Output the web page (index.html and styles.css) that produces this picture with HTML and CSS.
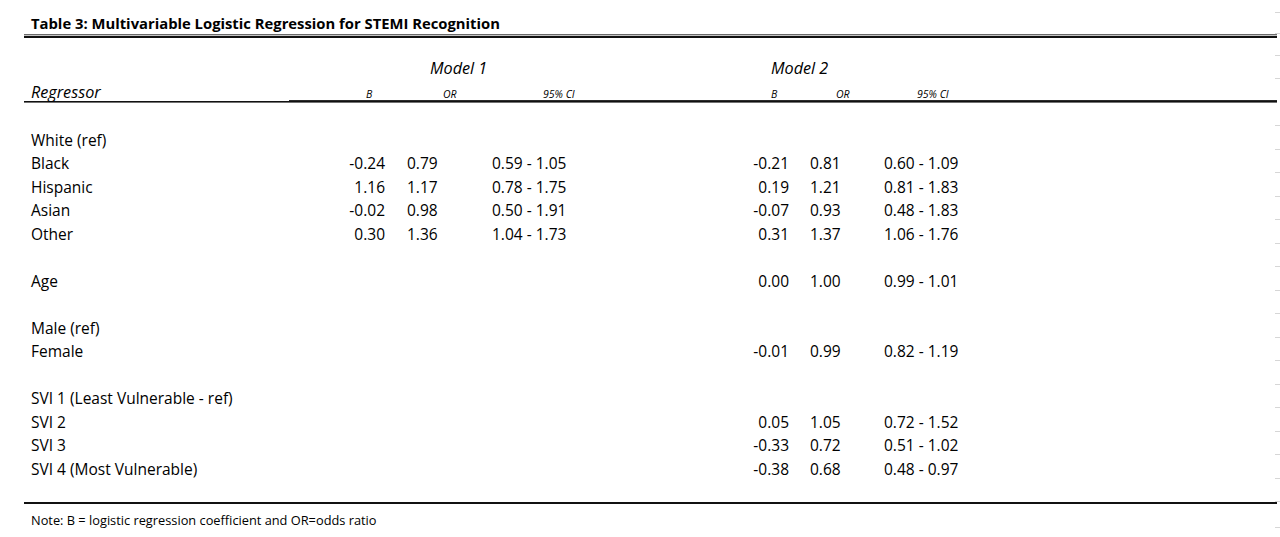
FILE: index.html
```html
<!DOCTYPE html>
<html lang="en">
<head>
<meta charset="utf-8">
<title>Table 3: Multivariable Logistic Regression for STEMI Recognition</title>
<link rel="stylesheet" href="styles.css">
</head>
<body>
<div class="sheet">
  <div class="top tk"></div>
  <div class="title-row tk">Table 3: Multivariable Logistic Regression for STEMI Recognition</div>
  <div class="rule-double"></div>
  <div class="gap-a tk"></div>
  <div class="model-row tk">
    <span></span>
    <span class="model">Model 1</span>
    <span class="model">Model 2</span>
  </div>
  <div class="head-row">
    <span class="regressor">Regressor</span>
    <span class="sub">B</span>
    <span class="sub">OR</span>
    <span class="sub">95% CI</span>
    <span class="sub">B</span>
    <span class="sub">OR</span>
    <span class="sub">95% CI</span>
  </div>
  <div class="rule-mid"></div>
  <div class="gap-b tk"></div>

  <div class="row tk"><span class="lbl">White (ref)</span></div>
  <div class="row tk"><span class="lbl">Black</span><span class="b">-0.24</span><span class="or">0.79</span><span class="ci">0.59 - 1.05</span><span class="b">-0.21</span><span class="or2">0.81</span><span class="ci">0.60 - 1.09</span></div>
  <div class="row tk"><span class="lbl">Hispanic</span><span class="b">1.16</span><span class="or">1.17</span><span class="ci">0.78 - 1.75</span><span class="b">0.19</span><span class="or2">1.21</span><span class="ci">0.81 - 1.83</span></div>
  <div class="row tk"><span class="lbl">Asian</span><span class="b">-0.02</span><span class="or">0.98</span><span class="ci">0.50 - 1.91</span><span class="b">-0.07</span><span class="or2">0.93</span><span class="ci">0.48 - 1.83</span></div>
  <div class="row tk"><span class="lbl">Other</span><span class="b">0.30</span><span class="or">1.36</span><span class="ci">1.04 - 1.73</span><span class="b">0.31</span><span class="or2">1.37</span><span class="ci">1.06 - 1.76</span></div>
  <div class="row tk"></div>
  <div class="row tk"><span class="lbl">Age</span><span></span><span></span><span></span><span class="b">0.00</span><span class="or2">1.00</span><span class="ci">0.99 - 1.01</span></div>
  <div class="row tk"></div>
  <div class="row tk"><span class="lbl">Male (ref)</span></div>
  <div class="row tk"><span class="lbl">Female</span><span></span><span></span><span></span><span class="b">-0.01</span><span class="or2">0.99</span><span class="ci">0.82 - 1.19</span></div>
  <div class="row tk"></div>
  <div class="row tk"><span class="lbl">SVI 1 (Least Vulnerable - ref)</span></div>
  <div class="row tk"><span class="lbl">SVI 2</span><span></span><span></span><span></span><span class="b">0.05</span><span class="or2">1.05</span><span class="ci">0.72 - 1.52</span></div>
  <div class="row tk"><span class="lbl">SVI 3</span><span></span><span></span><span></span><span class="b">-0.33</span><span class="or2">0.72</span><span class="ci">0.51 - 1.02</span></div>
  <div class="row tk"><span class="lbl">SVI 4 (Most Vulnerable)</span><span></span><span></span><span></span><span class="b">-0.38</span><span class="or2">0.68</span><span class="ci">0.48 - 0.97</span></div>
  <div class="row tk"></div>
  <div class="rule-bottom"></div>
  <div class="note-row tk">Note: B = logistic regression coefficient and OR=odds ratio</div>
</div>
</body>
</html>
```
FILE: styles.css
```css
* { box-sizing: border-box; }

html, body {
  margin: 0;
  padding: 0;
  background: #ffffff;
}

body {
  font-family: "Open Sans", "Noto Sans", sans-serif;
  color: #000000;
  width: 1280px;
  height: 537px;
  overflow: hidden;
}

.sheet {
  margin-left: 24px;
  width: 1256px;
}

/* faint spreadsheet gridline stubs at the right edge */
.tk {
  background: linear-gradient(#d6d6d6, #d6d6d6) right bottom / 5px 1px no-repeat;
}

.top { height: 12.5px; }

.title-row {
  height: 21px;
  padding-left: 7px;
  font-weight: 700;
  font-size: 14.8px;
  line-height: 21px;
  white-space: nowrap;
}

.rule-double {
  height: 4px;
  margin-right: 3px;
  background: linear-gradient(to bottom, #6a6a6a 0 1.5px, #c4c4c4 1.5px 2px, #111111 2px 4px);
}

.gap-a { height: 18.5px; }

.model-row {
  height: 23px;
  padding-left: 7px;
  padding-top: 1px;
  display: grid;
  grid-template-columns: 399px 341px 1fr;
  font-style: italic;
  font-size: 16.2px;
  line-height: 23px;
}

.head-row {
  height: 21px;
  padding-left: 7px;
  padding-top: 3px;
  display: grid;
  grid-template-columns: 335px 77px 100px 228px 65px 81px 1fr;
  align-items: baseline;
  font-style: italic;
  line-height: 21px;
}

.regressor { font-size: 16.2px; }
.sub { font-size: 10.5px; }

.rule-mid {
  height: 3px;
  margin-right: 3px;
  background:
    linear-gradient(#111111, #111111) 0 100% / 100% 1.6px no-repeat,
    linear-gradient(#2a2a2a, #2a2a2a) 265px 0 / calc(100% - 265px) 1.5px no-repeat;
}

.gap-b { height: 23px; }

.row {
  height: 23.5px;
  padding-left: 7px;
  padding-top: 3.5px;
  display: grid;
  grid-template-columns: 259px 95px 107px 208px 89px 95px 1fr;
  font-size: 15.5px;
  line-height: 20px;
  white-space: nowrap;
}

.b { text-align: right; }
.or { padding-left: 22px; }
.or2 { padding-left: 21px; }

.rule-bottom {
  height: 2px;
  margin-right: 3px;
  background: #111111;
}

.note-row {
  height: 23.5px;
  padding-left: 7px;
  padding-top: 8px;
  font-size: 12.8px;
  line-height: 16px;
  white-space: nowrap;
}
```
